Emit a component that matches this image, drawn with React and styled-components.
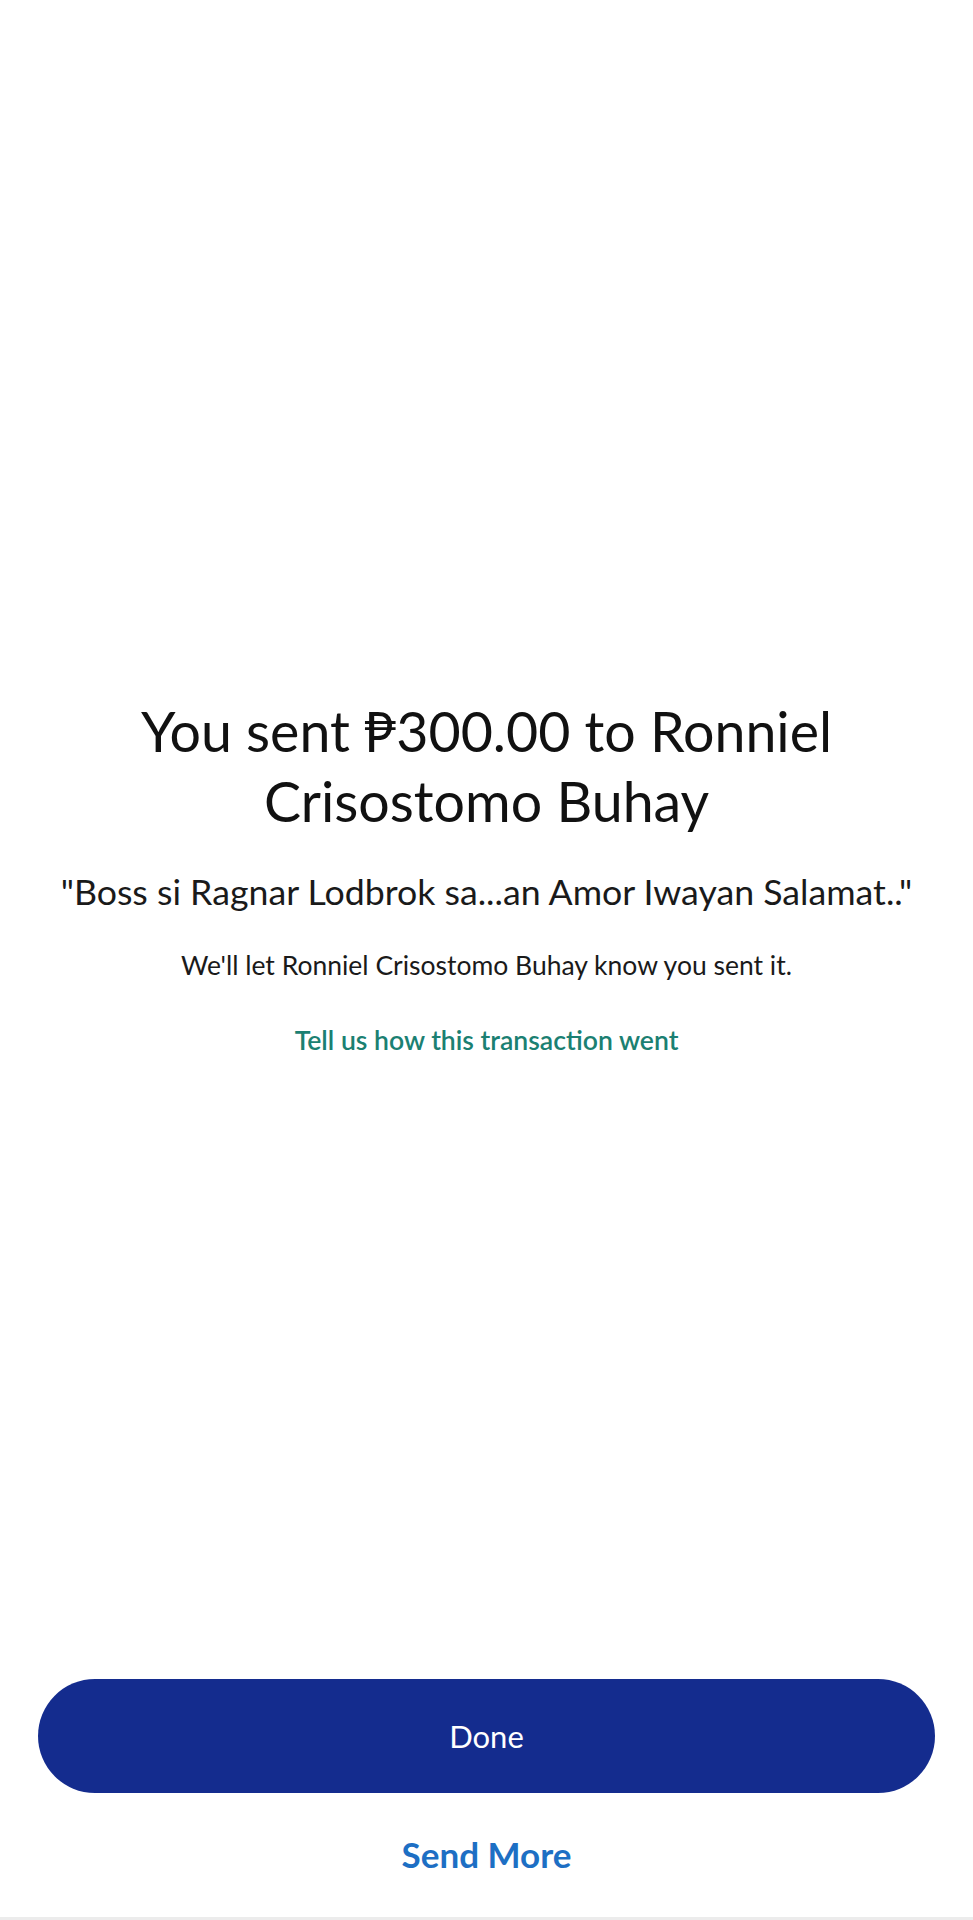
import React from 'react'
import styled, { createGlobalStyle } from 'styled-components'

const GlobalStyle = createGlobalStyle`
  html, body {
    margin: 0;
    padding: 0;
    background: #ffffff;
  }
  body {
    font-family: Lato, 'Noto Sans', 'Liberation Sans', sans-serif;
  }
`

const receipt = {
  amount: '₱300.00',
  recipient: 'Ronniel Crisostomo Buhay',
  note: '"Boss si Ragnar Lodbrok sa...an Amor Iwayan Salamat.."',
}

const App = () =>
  <React.Fragment>
    <GlobalStyle />
    <StyledPage>
      <StyledMain>
        <StyledTitle>{`You sent ${receipt.amount} to ${receipt.recipient}`}</StyledTitle>
        <StyledNote>{receipt.note}</StyledNote>
        <StyledNotice>{`We'll let ${receipt.recipient} know you sent it.`}</StyledNotice>
        <StyledFeedbackLink href='#'>Tell us how this transaction went</StyledFeedbackLink>
      </StyledMain>
      <StyledFooter>
        <StyledPrimaryButton>Done</StyledPrimaryButton>
        <StyledTextButton>Send More</StyledTextButton>
      </StyledFooter>
    </StyledPage>
  </React.Fragment>

const StyledPage = styled.div`
  display: flex;
  flex-direction: column;
  height: 1920px;
  box-sizing: border-box;
  border-bottom: 3px solid #ececec;
`

const StyledMain = styled.main`
  display: flex;
  flex-direction: column;
  align-items: center;
  padding: 696px 30px 0;
  flex: 1;
  text-align: center;
`

const StyledTitle = styled.h1`
  margin: 0;
  max-width: 760px;
  font-size: 55.5px;
  line-height: 70px;
  font-weight: 400;
  color: #111111;
`

const StyledNote = styled.p`
  margin: 34px 0 0;
  font-size: 35.7px;
  line-height: 44px;
  white-space: nowrap;
  color: #1a1a1a;
`

const StyledNotice = styled.p`
  margin: 34px 0 0;
  font-size: 26.5px;
  line-height: 34px;
  color: #1a1a1a;
`

const StyledFeedbackLink = styled.a`
  margin-top: 41px;
  font-size: 26.6px;
  line-height: 34px;
  font-weight: 600;
  color: #1b8072;
  text-decoration: none;
`

const StyledFooter = styled.footer`
  display: flex;
  flex-direction: column;
  align-items: center;
  padding: 0 38px 39px;
`

const StyledPrimaryButton = styled.button`
  width: 100%;
  height: 114px;
  border: none;
  border-radius: 57px;
  background: #142c8e;
  color: #ffffff;
  font-family: inherit;
  font-size: 31px;
  cursor: pointer;
`

const StyledTextButton = styled.button`
  margin-top: 37px;
  border: none;
  background: none;
  padding: 0;
  font-family: inherit;
  font-size: 35px;
  line-height: 48px;
  font-weight: 700;
  color: #1d6fc4;
  cursor: pointer;
`

export default App
